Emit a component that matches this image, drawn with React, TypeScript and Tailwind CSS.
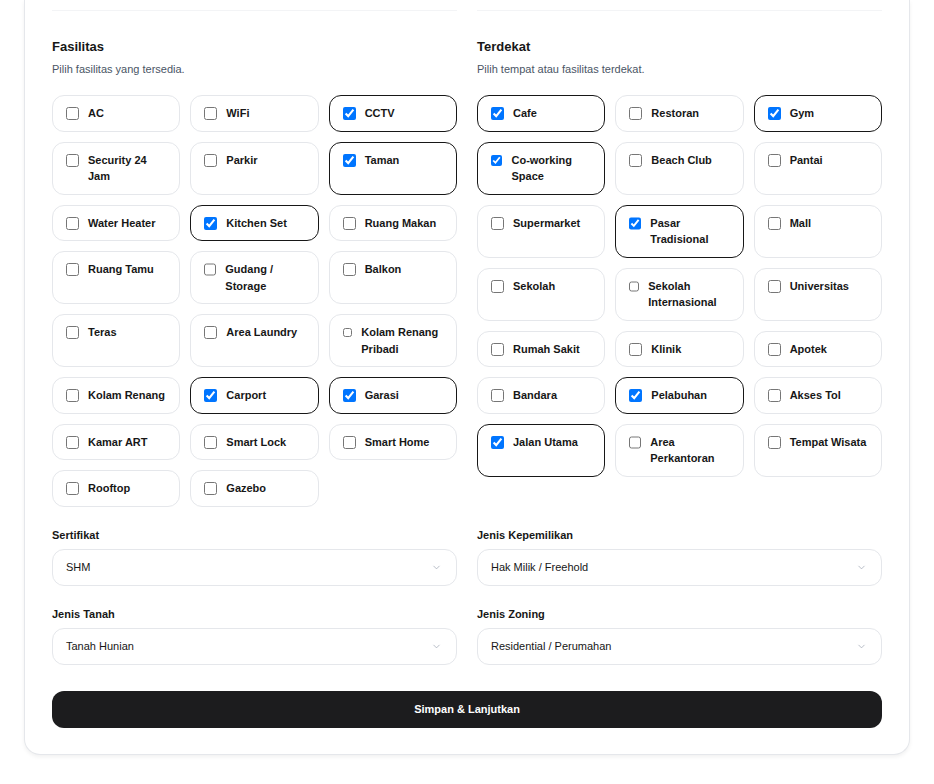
import React from "react";
import { ChevronDown } from "lucide-react";

type Item = { label: string; checked?: boolean };

const fasilitas: Item[] = [
  { label: "AC" },
  { label: "WiFi" },
  { label: "CCTV", checked: true },
  { label: "Security 24 Jam" },
  { label: "Parkir" },
  { label: "Taman", checked: true },
  { label: "Water Heater" },
  { label: "Kitchen Set", checked: true },
  { label: "Ruang Makan" },
  { label: "Ruang Tamu" },
  { label: "Gudang / Storage" },
  { label: "Balkon" },
  { label: "Teras" },
  { label: "Area Laundry" },
  { label: "Kolam Renang Pribadi" },
  { label: "Kolam Renang" },
  { label: "Carport", checked: true },
  { label: "Garasi", checked: true },
  { label: "Kamar ART" },
  { label: "Smart Lock" },
  { label: "Smart Home" },
  { label: "Rooftop" },
  { label: "Gazebo" },
];

const terdekat: Item[] = [
  { label: "Cafe", checked: true },
  { label: "Restoran" },
  { label: "Gym", checked: true },
  { label: "Co-working Space", checked: true },
  { label: "Beach Club" },
  { label: "Pantai" },
  { label: "Supermarket" },
  { label: "Pasar Tradisional", checked: true },
  { label: "Mall" },
  { label: "Sekolah" },
  { label: "Sekolah Internasional" },
  { label: "Universitas" },
  { label: "Rumah Sakit" },
  { label: "Klinik" },
  { label: "Apotek" },
  { label: "Bandara" },
  { label: "Pelabuhan", checked: true },
  { label: "Akses Tol" },
  { label: "Jalan Utama", checked: true },
  { label: "Area Perkantoran" },
  { label: "Tempat Wisata" },
];

function Tile({ item }: { item: Item }) {
  const [on, setOn] = React.useState(!!item.checked);
  return (
    <label
      className={
        on
          ? "flex items-start gap-[9px] rounded-xl border border-neutral-900 bg-white py-[9px] pl-[13px] pr-2 cursor-pointer"
          : "flex items-start gap-[9px] rounded-xl border border-gray-200 bg-white py-[9px] pl-[13px] pr-2 cursor-pointer"
      }
    >
      <input
        type="checkbox"
        checked={on}
        onChange={() => setOn(!on)}
        className="mt-[2px] min-w-0"
      />
      <span className="text-[11px] font-bold leading-[16.5px] text-neutral-900">{item.label}</span>
    </label>
  );
}

function Section({ title, subtitle, items }: { title: string; subtitle: string; items: Item[] }) {
  return (
    <div>
      <div className="h-[11px] border-b border-gray-100" />
      <h3 className="mt-[26px] text-[13px] font-bold leading-5 text-neutral-900">{title}</h3>
      <p className="mt-1 text-[11px] leading-4 text-gray-600">{subtitle}</p>
      <div className="mt-[18px] grid grid-cols-3 gap-x-2.5 gap-y-2.5">
        {items.map((it) => (
          <Tile key={it.label} item={it} />
        ))}
      </div>
    </div>
  );
}

function Field({ label, value }: { label: string; value: string }) {
  return (
    <div>
      <div className="text-[11px] font-bold leading-4 text-neutral-900">{label}</div>
      <button
        type="button"
        className="mt-1.5 flex h-[37px] w-full items-center justify-between rounded-xl border border-gray-200 bg-white pl-[13px] pr-[14px] text-left"
      >
        <span className="text-[11px] leading-4 text-neutral-900">{value}</span>
        <ChevronDown className="h-[11px] w-[11px] text-gray-400" strokeWidth={1.5} />
      </button>
    </div>
  );
}

export default function App() {
  return (
    <div
      className="min-h-screen bg-white px-6 pb-7"
      style={{ fontFamily: '"Liberation Sans", Arial, Helvetica, sans-serif' }}
    >
      <div className="rounded-b-2xl border-x border-b border-gray-200 bg-white px-[27px] pb-[26px] shadow-[0_2px_4px_rgba(0,0,0,0.06)]">
        <div className="grid grid-cols-2 items-start gap-x-5">
          <Section title="Fasilitas" subtitle="Pilih fasilitas yang tersedia." items={fasilitas} />
          <Section title="Terdekat" subtitle="Pilih tempat atau fasilitas terdekat." items={terdekat} />
        </div>

        <div className="mt-5 grid grid-cols-2 gap-x-5 gap-y-5">
          <Field label="Sertifikat" value="SHM" />
          <Field label="Jenis Kepemilikan" value="Hak Milik / Freehold" />
          <Field label="Jenis Tanah" value="Tanah Hunian" />
          <Field label="Jenis Zoning" value="Residential / Perumahan" />
        </div>

        <button
          type="button"
          className="mt-[26px] flex h-[37px] w-full items-center justify-center rounded-xl bg-[#1c1c1e] text-[11px] font-bold text-white"
        >
          Simpan &amp; Lanjutkan
        </button>
      </div>
    </div>
  );
}
